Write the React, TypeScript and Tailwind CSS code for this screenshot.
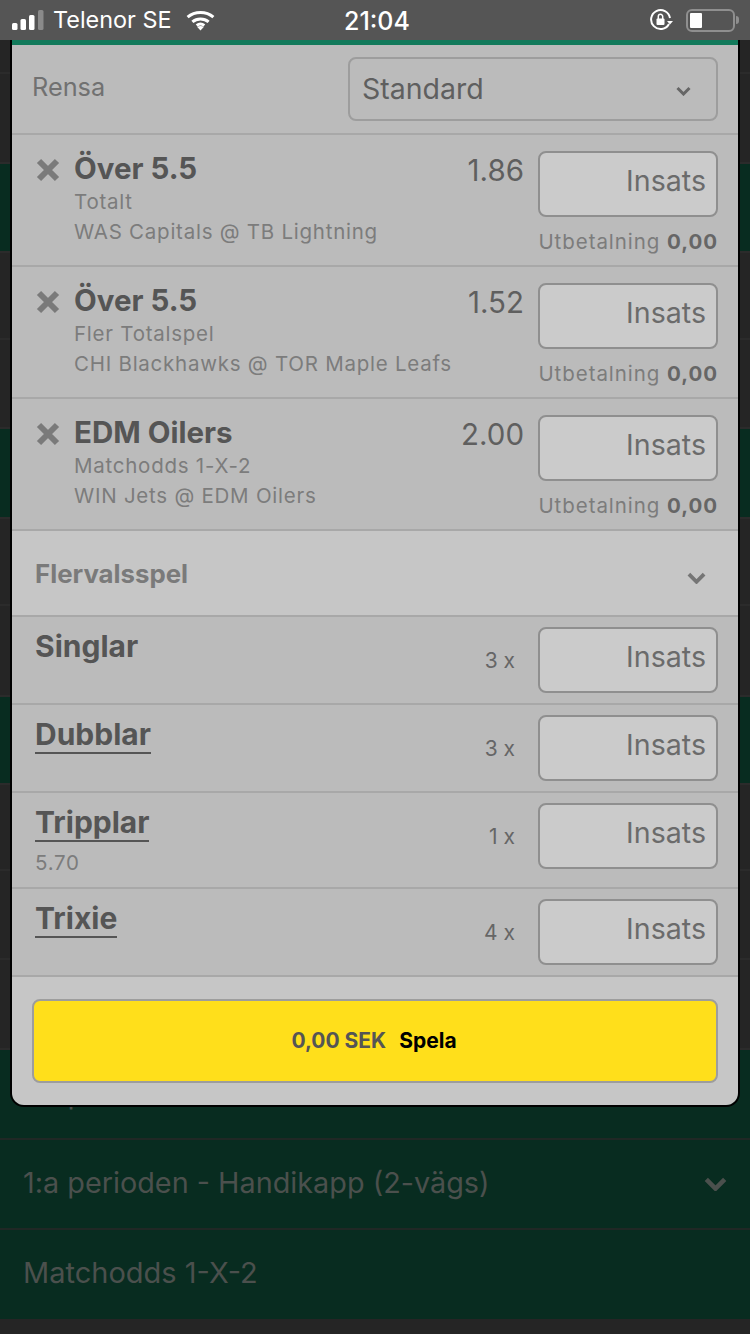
const font = "font-['Inter','Liberation_Sans',sans-serif]";

const bgRows = [
  { h: 'h-[34px]', bg: 'bg-[#252525]' },
  { h: 'h-[90px]', bg: 'bg-[#252525]' },
  { h: 'h-[89px]', bg: 'bg-[#082c20]' },
  { h: 'h-[87px]', bg: 'bg-[#252525]' },
  { h: 'h-[89px]', bg: 'bg-[#252525]' },
  { h: 'h-[90px]', bg: 'bg-[#082c20]' },
  { h: 'h-[87px]', bg: 'bg-[#252525]' },
  { h: 'h-[91px]', bg: 'bg-[#252525]' },
  { h: 'h-[88px]', bg: 'bg-[#082c20]' },
  { h: 'h-[86px]', bg: 'bg-[#252525]' },
  { h: 'h-[89px]', bg: 'bg-[#252525]' },
  { h: 'h-[90px]', bg: 'bg-[#252525]' },
];

const bets = [
  { title: 'Över 5.5', market: 'Totalt', match: 'WAS Capitals @ TB Lightning', odds: '1.86' },
  { title: 'Över 5.5', market: 'Fler Totalspel', match: 'CHI Blackhawks @ TOR Maple Leafs', odds: '1.52' },
  { title: 'EDM Oilers', market: 'Matchodds 1-X-2', match: 'WIN Jets @ EDM Oilers', odds: '2.00' },
];

const multis = [
  { name: 'Singlar', count: '3 x', h: 'h-[88px]', line: false },
  { name: 'Dubblar', count: '3 x', h: 'h-[88px]', line: true },
  { name: 'Tripplar', count: '1 x', h: 'h-[96px]', line: true, odds: '5.70' },
  { name: 'Trixie', count: '4 x', h: 'h-[88px]', line: true },
];

function Chevron({ className }: { className: string }) {
  return (
    <svg viewBox="0 0 20 12" className={className} fill="none" stroke="currentColor" strokeWidth="4">
      <path d="M2 2l8 8 8-8" />
    </svg>
  );
}

function StakeInput() {
  return (
    <div className="w-[180px] h-[66px] shrink-0 rounded-[8px] border-2 border-[#8f8f8f] bg-[#cbcbcb] flex items-center justify-end pr-[10px] pb-[6px] text-[28.600px] text-[#6b6b6b]">
      Insats
    </div>
  );
}

function StatusBar() {
  return (
    <div className="h-[40px] bg-[#555555] flex items-center text-white relative shrink-0">
      <svg viewBox="0 0 34 20" className="w-[34px] h-[20px] ml-[12px]" fill="currentColor">
        <rect x="0" y="13" width="5.5" height="7" rx="1.5" />
        <rect x="8.5" y="9" width="5.5" height="11" rx="1.5" />
        <rect x="17" y="5" width="5.5" height="15" rx="1.5" />
        <rect x="26" y="0" width="5.5" height="20" rx="1.5" fill="#8a8a8a" />
      </svg>
      <span className="ml-[7px] text-[23.400px] leading-none">Telenor SE</span>
      <svg viewBox="0 0 30 22" className="w-[29px] h-[21px] ml-[14px]" fill="none" stroke="currentColor" strokeWidth="3.2">
        <path d="M1.5 7.5c7.5-6.6 19.5-6.6 27 0" />
        <path d="M6.5 12.5c4.8-4 12.2-4 17 0" />
        <path d="M11 16.2c2.300-1.700 5.700-1.700 8 0" />
        <path d="M15 21.500l-3.400-3.800c2-1.300 4.800-1.300 6.800 0z" fill="currentColor" stroke="none" />
      </svg>
      <span className="absolute left-[344px] top-[8px] text-[25px] leading-[26px] font-medium">21:04</span>
      <svg viewBox="0 0 24 24" className="absolute left-[649px] top-[8px] w-[24px] h-[24px]" fill="none" stroke="currentColor" strokeWidth="2">
        <path d="M20 16a9.500 9.500 0 1 1 1-6" />
        <path d="M18 13h6l-3 3.500z" fill="currentColor" stroke="none" />
        <rect x="7.500" y="10.500" width="8" height="6.500" rx="1" fill="currentColor" stroke="none" />
        <path d="M9.300 11V8.500a2.200 2.200 0 0 1 4.400 0V11" strokeWidth="1.500" />
      </svg>
      <div className="absolute left-[686px] top-[9px] w-[49px] h-[23px] rounded-[6px] border-2 border-[#8f8f8f] p-[2px]">
        <div className="w-[12px] h-full bg-white rounded-[1px]" />
      </div>
      <div className="absolute left-[736px] top-[16px] w-[3px] h-[8px] rounded-r-[3px] bg-[#8f8f8f]" />
    </div>
  );
}

function BetRow({ title, market, match, odds }: { title: string; market: string; match: string; odds: string }) {
  return (
    <div className="h-[132px] border-b-2 border-[#a8a8a8] bg-[#bbbbbb] flex pt-[16px] pr-[20px]">
      <svg viewBox="0 0 24 24" className="w-[24px] h-[24px] ml-[24px] mt-[7px] shrink-0 text-[#7a7a7a]" fill="none" stroke="currentColor" strokeWidth="6">
        <path d="M3 3l18 18M21 3L3 21" />
      </svg>
      <div className="ml-[14px] flex-1 min-w-0">
        <div className="text-[29.500px] leading-[36px] -mt-[1px] mb-[1px] font-bold text-[#555555]">{title}</div>
        <div className="text-[20.500px] tracking-[0.75px] leading-[30px] text-[#7c7c7c]">{market}</div>
        <div className="text-[20.500px] tracking-[0.75px] leading-[30px] text-[#7c7c7c] whitespace-nowrap">{match}</div>
      </div>
      <div className="text-[29.500px] leading-[38px] text-[#5f5f5f] mr-[14px]">{odds}</div>
      <div className="flex flex-col items-end">
        <StakeInput />
        <div className="text-[20.500px] tracking-[0.95px] leading-[28px] mt-[11px] text-[#7c7c7c] whitespace-nowrap">
          Utbetalning <span className="font-bold text-[#666666]">0,00</span>
        </div>
      </div>
    </div>
  );
}

function MultiRow({ name, count, h, line, odds }: { name: string; count: string; h: string; line: boolean; odds?: string }) {
  return (
    <div className={`${h} border-b-2 border-[#a8a8a8] bg-[#bbbbbb] flex pt-[11px] pl-[23px] pr-[20px]`}>
      <div className="flex-1">
        <div className={`inline-block text-[30px] leading-[36px] font-bold text-[#555555] ${line ? 'border-b-2 border-[#555555]' : ''}`}>
          {name}
        </div>
        {odds && <div className="text-[20.500px] tracking-[0.75px] leading-[24px] mt-[9px] text-[#7c7c7c]">{odds}</div>}
      </div>
      <div className="text-[21px] text-[#666666] mt-[17px] mr-[23px]">{count}</div>
      <div className="-mt-[1px]">
        <StakeInput />
      </div>
    </div>
  );
}

export default function App() {
  return (
    <div className={`${font} relative w-[750px] h-[1334px] overflow-hidden bg-[#252525]`}>
      <StatusBar />

      {/* page behind the dimmed overlay */}
      <div className="flex flex-col">
        {bgRows.map((r, i) => (
          <div key={i} className={`${r.h} ${r.bg} border-b-2 border-[#2b2b2b]`} />
        ))}
        <div className="h-[90px] bg-[#082c20] border-b-2 border-[#202825] pl-[23px] text-[29px] text-[#4b504d] flex items-center">
          1:a perioden
        </div>
        <div className="h-[90px] bg-[#082c20] border-b-2 border-[#202825] pl-[23px] pr-[23px] pb-[2px] text-[28.800px] text-[#4b504d] flex items-center justify-between">
          1:a perioden - Handikapp (2-vägs)
          <Chevron className="w-[23px] h-[14px] text-[#4b504d] mt-[2px]" />
        </div>
        <div className="h-[89px] bg-[#082c20] pl-[23px] pb-[4px] text-[29px] text-[#4b504d] flex items-center">Matchodds 1-X-2</div>
      </div>

      {/* betslip */}
      <div className="absolute left-[10px] top-[40px] w-[730px] rounded-b-[14px] border-x-2 border-b-2 border-black overflow-hidden">
        <div className="h-[5px] bg-[#127a5b]" />
        <div className="h-[90px] border-b-2 border-[#a8a8a8] bg-[#bbbbbb] flex items-center justify-between pl-[20px] pr-[20px]">
          <span className="text-[25.300px] text-[#717171] -mt-[4px]">Rensa</span>
          <div className="w-[370px] h-[64px] rounded-[8px] border-2 border-[#9d9d9d] flex items-center justify-between pl-[12px] pr-[25px] text-[28.500px] text-[#5f5f5f]">
            Standard
            <Chevron className="w-[15px] h-[10px] text-[#666666] mt-[4px]" />
          </div>
        </div>
        {bets.map((b, i) => (
          <BetRow key={i} {...b} />
        ))}
        <div className="h-[86px] border-b-2 border-[#a8a8a8] bg-[#c6c6c6] flex items-center justify-between pl-[23px] pr-[32px]">
          <span className="text-[25.800px] font-bold text-[#7a7a7a] mt-[3px]">Flervalsspel</span>
          <Chevron className="w-[19px] h-[12px] text-[#757575] mt-[10px]" />
        </div>
        {multis.map((m, i) => (
          <MultiRow key={i} {...m} />
        ))}
        <div className="h-[128px] bg-[#c6c6c6] pt-[22px] pl-[20px] pr-[20px]">
          <div className="h-[84px] rounded-[8px] border-2 border-[#9d9d9d] bg-[#ffdf1b] flex items-center justify-center gap-[13px] pr-[2px] pb-[1px] text-[21px] font-bold">
            <span className="text-[#555555]">0,00 SEK</span>
            <span className="text-black">Spela</span>
          </div>
        </div>
      </div>
    </div>
  );
}
